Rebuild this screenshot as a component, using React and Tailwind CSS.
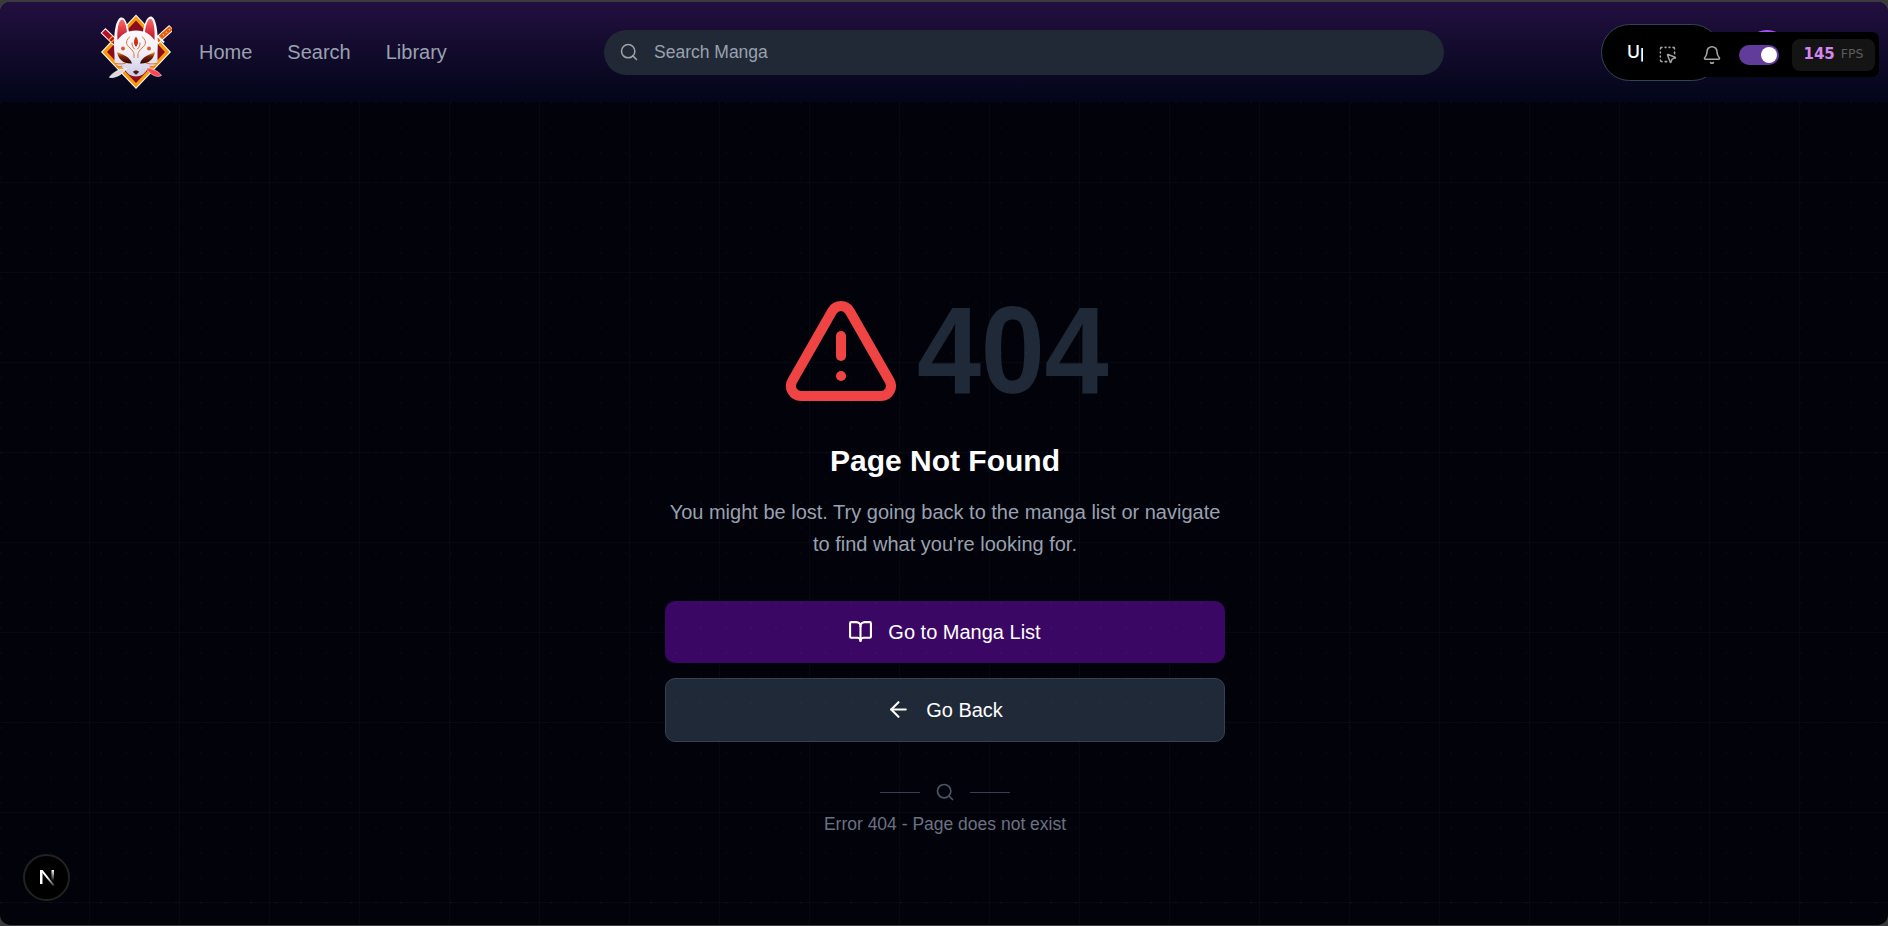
import React from "react";
import { Search, TriangleAlert, BookOpen, ArrowLeft, Bell, SquareDashedMousePointer } from "lucide-react";

function FoxLogo() {
  return (
    <svg viewBox="0 0 72 76" className="h-[76px] w-[72px] shrink-0">
      <defs>
        <linearGradient id="ear" x1="0" y1="0" x2="0" y2="1">
          <stop offset="0" stopColor="#ff6a6a" />
          <stop offset="1" stopColor="#b80f22" />
        </linearGradient>
        <linearGradient id="face" x1="0" y1="0" x2="0" y2="1">
          <stop offset="0" stopColor="#ffffff" />
          <stop offset="0.6" stopColor="#f1f0fa" />
          <stop offset="1" stopColor="#c9c8e4" />
        </linearGradient>
        <linearGradient id="eye" x1="0" y1="0" x2="0" y2="1">
          <stop offset="0" stopColor="#f5a020" />
          <stop offset="0.4" stopColor="#7a2206" />
          <stop offset="1" stopColor="#2b0903" />
        </linearGradient>
      </defs>
      <path d="M36 .5 71 38 36 75 1 38Z" fill="#fff" />
      <path d="M36 2 69.500 38 36 73.500 2.500 38Z" fill="#f79a0b" />
      <path d="M36 6.500 65 38 36 69 7 38Z" fill="#8c0d1b" />
      <g strokeLinecap="butt">
        <path d="M71.500 13.500 56 27.500" stroke="#fff" strokeWidth="7" />
        <path d="M71 14 57 26.500" stroke="#e85a0c" strokeWidth="5" />
        <path d="M70 15 61 23" stroke="#ffcf59" strokeWidth="1.400" strokeDasharray="1.500 2.500" />
        <path d="M57.500 22 64 28.500" stroke="#fff" strokeWidth="2" />
        <path d="M3 16.500 16 29" stroke="#fff" strokeWidth="7" />
        <path d="M3.700 17.200 16 29" stroke="#ba1027" strokeWidth="5" />
        <path d="M8.500 26 13 22M11 28.500 15.500 24.500" stroke="#f4a51b" strokeWidth="1.300" />
      </g>
      <path d="M14.500 40C13.500 28 14 7 20.500 3.500 25 2.500 27 9 29 17.500c4.500-1.300 9.500-1.300 14 0C44.500 9 47 2 51.500 2.500 58 5 58.500 28 57.500 40v7.500c-1.500 4-6 5.500-10 7.500-2.500 4.500-6 7.500-11.500 7.500S27 59.500 24.500 55c-4-2-8.500-3.500-10-7.500Z" fill="url(#face)" />
      <path d="M17.500 26C16.800 16 18.500 6 22 5.500c2.800 0 4.500 7.500 5 12.500-3.500 1.800-7 4.500-9.500 8Z" fill="url(#ear)" />
      <path d="M54.500 26C55.200 15 53.500 5 50.500 4.800c-3 0-5 7.700-5.500 13.200 3.500 1.800 7 4.500 9.500 8Z" fill="url(#ear)" />
      <path d="M36 22.500c2.700 4 2.700 7 0 10.500-2.700-3.500-2.700-6.500 0-10.500Z" fill="#cf2c12" />
      <g fill="none" stroke="#dd7132" strokeWidth="1" strokeLinecap="round">
        <path d="M29.500 23c-5 5-3 8 .5 11s4.500 5.500 4 9.500M42.500 23c5 5 3 8-.5 11s-4.500 5.500-4 9.500" />
        <path d="M32 29c0 3 .8 4.500 2.500 6M40 29c0 3-.8 4.500-2.500 6" />
        <path d="M15.500 49.500c4 .8 8 .5 10.500-.5M56.500 49.500c-4 .8-8 .5-10.500-.5M17 53l5-.8M55 53l-5-.8" />
      </g>
      <circle cx="23" cy="34.500" r="1.900" fill="#dc5a15" />
      <circle cx="49" cy="34.500" r="1.900" fill="#dc5a15" />
      <path d="M17 38c6 3 13 4.500 15 11.500C24 50 18.500 46 17 38ZM55 38c-6 3-13 4.500-15 11.500 8 .5 13.500-3.500 15-11.500Z" fill="url(#eye)" />
      <path d="M33 58c1-2 5-2 6 0l-3 2.800Z" fill="#4a170d" />
      <path d="M26.500 54.500c-6 0-14 4-17 8.800 6 1 13-3 17-8.800Z" fill="#dcd9da" stroke="#fff" strokeWidth=".8" />
      <path d="M46 54c6 0 13 3.500 15.500 7.500-5 3-12-1.500-15.500-7.500Z" fill="#ff4654" stroke="#fff" strokeWidth=".5" />
    </svg>
  );
}

function NavBar() {
  return (
    <header className="flex h-25 shrink-0 items-center bg-linear-to-b from-[#230f40] to-[#030619] pl-[100px]">
      <FoxLogo />
      <nav className="ml-[27px] flex w-[378px] gap-[35px] text-[20px] text-[#99a1af]">
        <a>Home</a>
        <a>Search</a>
        <a>Library</a>
      </nav>
      <div className="ml-[27px] flex h-[45px] w-[840px] items-center gap-[15px] rounded-full bg-[#212937] pl-[15px] text-[17.5px] text-[#99a1af]">
        <Search size={20} strokeWidth={1.8} className="text-[#a3a3a3]" />
        <span>Search Manga</span>
      </div>
      <div className="relative ml-[157px] h-[57px] w-[287px]">
        <div className="flex h-[57px] w-[120px] items-center rounded-full border border-[#364153] bg-black pl-[25px] font-['Inter',sans-serif] text-[17.5px] font-medium text-white">
          <span>Up</span>
        </div>
        <div className="absolute top-[6px] left-[143px] size-[46px] rounded-full bg-[#a651f2]" />
        <Toolbar />
      </div>
    </header>
  );
}

function Toolbar() {
  return (
    <div className="absolute top-[8.5px] left-[42px] flex h-[45px] w-[236px] items-center rounded-r-[7px] bg-black pl-[15px] text-[#a3a3a3]">
      <SquareDashedMousePointer size={19} strokeWidth={1.9} />
      <Bell size={20} strokeWidth={1.9} className="ml-[25px]" />
      <div className="ml-[17px] flex h-5 w-10 items-center justify-end rounded-full bg-[#613c9b] pr-[2px]">
        <div className="size-4 rounded-full bg-white" />
      </div>
      <div className="ml-[13px] flex h-8 w-[83px] items-center justify-center gap-[6px] rounded-[8px] bg-[#141414] font-['DejaVu_Sans',sans-serif]">
        <b className="text-[15px] text-[#d685f0]">145</b>
        <span className="text-[12.5px] text-[#5c5c5c]">FPS</span>
      </div>
    </div>
  );
}

function NotFound() {
  return (
    <main className="relative flex flex-1 flex-col items-center pt-[189px] pl-[2px]">
      <div className="flex h-[120px] w-[328px] items-center gap-[16px]">
        <TriangleAlert size={120} className="shrink-0 text-[#f04444]" />
        <span className="origin-left scale-x-93 pb-[2px] text-[124px] leading-[120px] font-bold tracking-[-0.4px] text-[#1f2937]">404</span>
      </div>
      <h1 className="mt-[30px] text-[30px] leading-[40px] font-bold text-white">Page Not Found</h1>
      <p className="mt-[15px] w-[560px] text-center text-[20px] leading-[32px] text-[#99a1af]">
        You might be lost. Try going back to the manga list or navigate to find what you're looking for.
      </p>
      <div className="mt-[41px] flex w-[560px] flex-col gap-[15px] text-[20px] font-medium text-white">
        <button className="flex h-[62px] items-center justify-center gap-[15px] rounded-[10px] bg-[#3b0764] pr-px pb-px">
          <BookOpen size={25} strokeWidth={2} />
          Go to Manga List
        </button>
        <button className="flex h-[64px] items-center justify-center gap-[15px] rounded-[10px] border border-[#364153] bg-[#1f2937] pr-px pb-px">
          <ArrowLeft size={25} strokeWidth={2} />
          Go Back
        </button>
      </div>
      <div className="mt-[40px] flex items-center gap-[15px] text-[#4a5565]">
        <div className="h-px w-10 bg-[#364153]" />
        <Search size={20} strokeWidth={2} />
        <div className="h-px w-10 bg-[#364153]" />
      </div>
      <p className="mt-[10px] text-[17.5px] leading-[25px] text-[#6a7282]">Error 404 - Page does not exist</p>
    </main>
  );
}

function DevBadge() {
  return (
    <div className="absolute bottom-[24px] left-[23px] flex size-[47px] items-center justify-center rounded-full border-2 border-[#222] bg-black">
      <svg viewBox="0 0 16 17" className="h-[17px] w-4" fill="none">
        <defs>
          <linearGradient id="stem" x1="0" y1="0" x2="0" y2="1">
            <stop stopColor="#fff" />
            <stop offset="1" stopColor="#fff" stopOpacity="0" />
          </linearGradient>
          <linearGradient id="diagonal" gradientUnits="userSpaceOnUse" x1="8" y1="8" x2="15" y2="17">
            <stop stopColor="#fff" />
            <stop offset="1" stopColor="#fff" stopOpacity="0.2" />
          </linearGradient>
        </defs>
        <rect x="1" y="1" width="2.500" height="14" fill="#fff" />
        <path d="M1 1h2.600L15.500 16 14 17Z" fill="url(#diagonal)" />
        <rect x="12.500" y="1" width="2.500" height="11" fill="url(#stem)" />
      </svg>
    </div>
  );
}

export default function App() {
  return (
    <div className="h-[926px] bg-[#3b3b3b] pt-[2px] pb-px font-['Liberation_Sans',sans-serif]">
      <div className="relative flex h-full flex-col overflow-hidden rounded-[10px] bg-[#02020b]">
        <NavBar />
        <div className="pointer-events-none absolute inset-x-0 top-[100px] bottom-0 bg-[linear-gradient(to_right,transparent_89px,#ffffff06_89px),linear-gradient(to_bottom,transparent_89px,#ffffff06_89px)] bg-size-[90px_90px] bg-position-[0_-99px]" />
        <NotFound />
        <div className="pointer-events-none absolute inset-x-0 top-[100px] bottom-0 bg-[radial-gradient(circle_at_1px_1px,#ffffff05_1px,transparent_0)] bg-size-[25px_25px]" />
        <DevBadge />
      </div>
    </div>
  );
}
